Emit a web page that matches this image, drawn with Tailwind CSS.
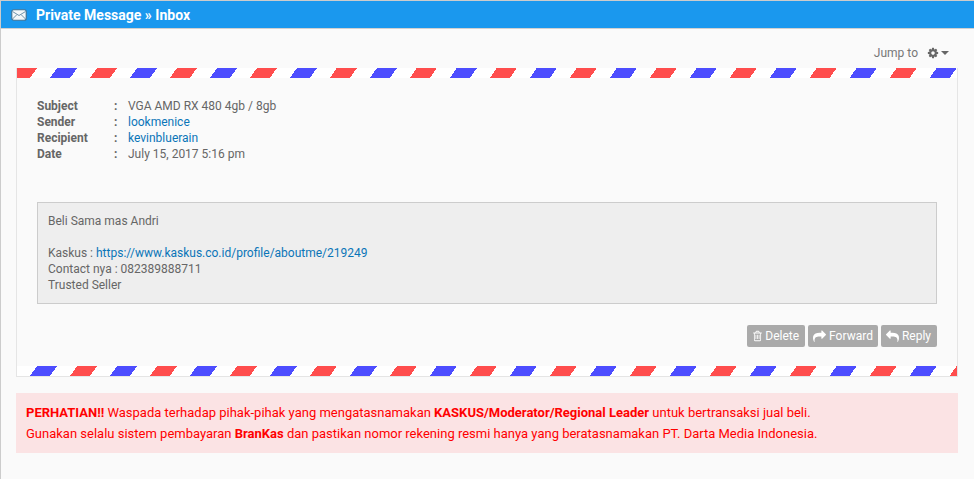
<!DOCTYPE html>
<html lang="en">
<head>
    <meta charset="UTF-8">
    <title>Private Message - Inbox</title>
    <script src="https://cdn.jsdelivr.net/npm/@tailwindcss/browser@4"></script>
</head>
<body class="bg-[#fafafa] font-['Roboto',sans-serif] text-[12px] leading-4 text-[#666] overflow-hidden">
    <div class="h-[479px] border-l border-t border-[#ccc]">
        <!-- Header -->
        <div class="h-[27px] bg-[#1a98ee] border-b border-[#d0d0d0] box-content flex items-center pl-[10px] text-white font-bold text-[14px]">
            <svg class="w-[16px] h-[12px] mr-[9px]" viewBox="0 0 16 12">
                <rect x="0.75" y="0.75" width="14.5" height="10.5" rx="2" fill="#f4f7f9" stroke="#3f7396" stroke-width="1.2"/>
                <path d="M1.5 2.5 8 6.5l6.5-4M1.5 10l4.5-4.5M14.5 10 10 5.500" fill="none" stroke="#6f93ab" stroke-width="1"/>
            </svg>
            <span>Private Message » Inbox</span>
        </div>

        <!-- Jump to -->
        <div class="h-[39px] flex items-center justify-end pr-[25px] pt-[8px] gap-[9px]">
            <span class="text-[12px] text-[#777]">Jump to</span>
            <span class="flex items-center gap-[2px] text-[#666]">
                <svg class="w-[12px] h-[12px]" viewBox="0 0 1792 1792" fill="currentColor"><path d="M1152 896q0-106-75-181t-181-75-181 75-75 181 75 181 181 75 181-75 75-181zm512-109v222q0 12-8 23t-20 13l-185 28q-19 54-39 91 35 50 107 138 10 12 10 25t-9 23q-27 37-99 108t-94 71q-12 0-26-9l-138-108q-44 23-91 38-16 136-29 186-7 28-36 28h-222q-14 0-24.5-8.5t-11.5-21.5l-28-184q-49-16-90-37l-141 107q-10 9-25 9-14 0-25-11-126-114-165-168-7-10-7-23 0-12 8-23 15-21 51-66.5t54-70.5q-27-50-41-99l-183-27q-13-2-21-12.5t-8-23.5v-222q0-12 8-23t19-13l186-28q14-46 39-92-40-57-107-138-10-12-10-24 0-10 9-23 26-36 98.5-107.5t94.5-71.5q13 0 26 10l138 107q44-23 91-38 16-136 29-186 7-28 36-28h222q14 0 24.5 8.5t11.5 21.5l28 184q49 16 90 37l142-107q9-9 24-9 13 0 25 10 129 119 165 170 7 8 7 22 0 12-8 23-15 21-51 66.5t-54 70.5q26 50 41 98l183 28q13 2 21 12.5t8 23.5z"/></svg>
                <span class="w-0 h-0 border-x-[4px] border-x-transparent border-t-[4px] border-t-[#666]"></span>
            </span>
        </div>

        <!-- Message card -->
        <div class="ml-[15px] mr-[16px] border border-t-0 border-[#e5e5e5] h-[309px] flex flex-col">
            <div class="h-[10px] bg-[repeating-linear-gradient(125deg,#ff4d4d_0,#ff4d4d_16.4px,#fff_16.4px,#fff_32.8px,#4d4dff_32.8px,#4d4dff_49.2px,#fff_49.2px,#fff_65.5px)]"></div>

            <div class="flex-1 px-[20px] pt-[20px]">
                <div class="grid grid-cols-[77px_14px_1fr]">
                    <b class="font-bold">Subject</b><b class="font-bold">:</b><span>VGA AMD RX 480 4gb / 8gb</span>
                    <b class="font-bold">Sender</b><b class="font-bold">:</b><a class="text-[#0a75b8]" href="#">lookmenice</a>
                    <b class="font-bold">Recipient</b><b class="font-bold">:</b><a class="text-[#0a75b8]" href="#">kevinbluerain</a>
                    <b class="font-bold">Date</b><b class="font-bold">:</b><span>July 15, 2017 5:16 pm</span>
                </div>

                <div class="mt-[40px] bg-[#eee] border border-[#ccc] px-[10px] py-[10px]">
                    <p>Beli Sama mas Andri</p>
                    <p class="mt-4">Kaskus : <a class="text-[#0a75b8]" href="#">https://www.kaskus.co.id/profile/aboutme/219249</a></p>
                    <p>Contact nya : 082389888711</p>
                    <p>Trusted Seller</p>
                </div>

                <div class="mt-[21px] flex justify-end gap-[3px] text-white">
                    <button class="h-[22px] pl-[5px] pr-[6px] bg-[#aaa] rounded-[2px] flex items-center gap-[2px]">
                        <svg class="w-[11px] h-[12px]" viewBox="0 0 1792 1792" preserveAspectRatio="none" fill="currentColor"><path d="M704 736v576q0 14-9 23t-23 9h-64q-14 0-23-9t-9-23v-576q0-14 9-23t23-9h64q14 0 23 9t9 23zm256 0v576q0 14-9 23t-23 9h-64q-14 0-23-9t-9-23v-576q0-14 9-23t23-9h64q14 0 23 9t9 23zm256 0v576q0 14-9 23t-23 9h-64q-14 0-23-9t-9-23v-576q0-14 9-23t23-9h64q14 0 23 9t9 23zm128 724v-948h-896v948q0 22 7 40.5t14.5 27 10.500 8.500h832q3 0 10.500-8.500t14.500-27 7-40.500zm-672-1076h448l-48-117q-7-9-17-11h-317q-10 2-17 11zm928 32v64q0 14-9 23t-23 9h-96v948q0 83-47 143.500t-113 60.500h-832q-66 0-113-58.500t-47-141.500v-952h-96q-14 0-23-9t-9-23v-64q0-14 9-23t23-9h309l70-167q15-37 54-63t79-26h320q40 0 79 26t54 63l70 167h309q14 0 23 9t9 23z"/></svg>
                        Delete
                    </button>
                    <button class="h-[22px] px-[5px] bg-[#aaa] rounded-[2px] flex items-center gap-[3px]">
                        <svg class="w-[13px] h-[13px]" viewBox="0 0 1792 1792" fill="currentColor"><path d="M1792 640q0 26-19 45l-512 512q-19 19-45 19t-45-19-19-45v-256h-224q-98 0-175.5 6t-154 21.5-133 42.5-105.5 69.5-80 101-48.5 138.5-17.5 181q0 55 5 123 0 6 2.5 23.5t2.5 26.5q0 15-8.5 25t-23.5 10q-16 0-28-17-7-9-13-22t-13.5-30-10.5-24q-127-285-127-451 0-199 53-333 162-403 875-403h224v-256q0-26 19-45t45-19 45 19l512 512q19 19 19 45z"/></svg>
                        Forward
                    </button>
                    <button class="h-[22px] pl-[5px] pr-[6px] bg-[#aaa] rounded-[2px] flex items-center gap-[3px]">
                        <svg class="w-[13px] h-[13px]" viewBox="0 0 1792 1792" fill="currentColor"><path d="M1792 1120q0 166-127 451-3 7-10.5 24t-13.5 30-13 22q-12 17-28 17-15 0-23.5-10t-8.5-25q0-9 2.5-26.5t2.5-23.5q5-68 5-123 0-101-17.5-181t-48.5-138.5-80-101-105.5-69.5-133-42.5-154-21.5-175.5-6h-224v256q0 26-19 45t-45 19-45-19l-512-512q-19-19-19-45t19-45l512-512q19-19 45-19t45 19 19 45v256h224q713 0 875 403 53 134 53 333z"/></svg>
                        Reply
                    </button>
                </div>
            </div>

            <div class="h-[10px] bg-[repeating-linear-gradient(125deg,#fff_0,#fff_16.4px,#4d4dff_16.4px,#4d4dff_32.8px,#fff_32.8px,#fff_49.2px,#ff4d4d_49.2px,#ff4d4d_65.5px)]"></div>
        </div>

        <!-- Warning -->
        <div class="ml-[15px] mr-[16px] mt-[16px] h-[60px] bg-[#fbe3e4] px-[10px] py-[9px] text-[13px] leading-[21px] text-[#ff0000]">
            <p><b class="font-bold">PERHATIAN!!</b> Waspada terhadap pihak-pihak yang mengatasnamakan <b class="font-bold">KASKUS/Moderator/Regional Leader</b> untuk bertransaksi jual beli.</p>
            <p>Gunakan selalu sistem pembayaran <b class="font-bold">BranKas</b> dan pastikan nomor rekening resmi hanya yang beratasnamakan PT. Darta Media Indonesia.</p>
        </div>
    </div>
</body>
</html>
